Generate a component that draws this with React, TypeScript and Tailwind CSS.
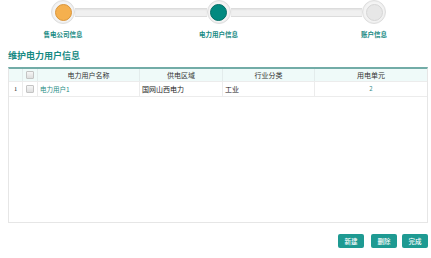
import React from "react";

function Step({ color, ring, label }: { color: string; ring: string; label: string }) {
  return (
    <div className="flex flex-col items-center w-[24px]">
      <div className="w-[24px] h-[24px] rounded-full bg-[#f4f4f4] border border-[#dedede] flex items-center justify-center shadow-[inset_0_0_2px_rgba(0,0,0,0.08)]">
        <div
          className="w-[17px] h-[17px] rounded-full border"
          style={{ backgroundColor: color, borderColor: ring }}
        />
      </div>
      <div className="mt-[5px] whitespace-nowrap text-[6.5px] leading-[10px] font-bold text-[#178a83]">
        {label}
      </div>
    </div>
  );
}

function Bar() {
  return (
    <div className="flex-1 h-[9px] mt-[7.5px] bg-[#f0f0f0] border-y border-[#dcdcdc] shadow-[inset_0_1px_2px_rgba(0,0,0,0.06)]" />
  );
}

function Checkbox() {
  return (
    <div className="w-[8px] h-[8px] border border-[#c4c4c4] rounded-[1px] bg-gradient-to-b from-[#f6f6f6] to-[#dedede]" />
  );
}

export default function App() {
  return (
    <div
      className="w-[431px] h-[258px] bg-white relative overflow-hidden"
      style={{ fontFamily: '"Noto Sans CJK SC", "Noto Sans", sans-serif' }}
    >
      {/* Steps */}
      <div className="flex items-start pl-[51px] w-[386px] pt-0">
        <Step color="#f5b04e" ring="#d9953a" label="售电公司信息" />
        <Bar />
        <Step color="#018a80" ring="#016e66" label="电力用户信息" />
        <Bar />
        <Step color="#e7e7e7" ring="#d6d6d6" label="账户信息" />
      </div>

      {/* Title */}
      <div className="pl-[8px] mt-[11px] text-[9px] leading-[12px] font-bold text-[#178a83]">
        维护电力用户信息
      </div>

      {/* Table */}
      <div className="ml-[8px] mt-[5px] w-[420px] h-[156px] border-x border-b border-[#e6e6e6] border-t-2 border-t-[#72aca7] flex flex-col">
        <div className="flex h-[12px] bg-[#effaf9] text-[7px] leading-[12px] text-[#333]">
          <div className="w-[14px] border-r border-[#e3ecec]" />
          <div className="w-[15px] border-r border-[#e3ecec] flex items-center justify-center">
            <Checkbox />
          </div>
          <div className="w-[102px] border-r border-[#e3ecec] text-center">电力用户名称</div>
          <div className="w-[83px] border-r border-[#e3ecec] text-center">供电区域</div>
          <div className="w-[92px] border-r border-[#e3ecec] text-center">行业分类</div>
          <div className="flex-1 text-center">用电单元</div>
        </div>
        <div className="flex h-[16px] border-y border-[#ececec] text-[7px] leading-[14px] text-[#222]">
          <div
            className="w-[14px] border-r border-[#ececec] text-center text-[6.5px]"
            style={{ fontFamily: '"Liberation Serif", serif' }}
          >
            1
          </div>
          <div className="w-[15px] border-r border-[#ececec] flex items-center justify-center">
            <Checkbox />
          </div>
          <div className="w-[102px] border-r border-[#ececec] pl-[2px] text-[6.5px] text-[#1f8d85]">电力用户1</div>
          <div className="w-[83px] border-r border-[#ececec] pl-[2px]">国网山西电力</div>
          <div className="w-[92px] border-r border-[#ececec] pl-[2px]">工业</div>
          <div className="flex-1 text-center text-[6px] text-[#3a8f8a]">2</div>
        </div>
        <div className="flex-1" />
      </div>

      {/* Buttons */}
      <div className="flex justify-end pr-[3px] mt-[11px]">
        <button className="w-[26px] h-[14px] rounded-[2px] bg-[#1e9a92] text-white text-[6.5px] leading-[14px] font-medium">
          新建
        </button>
        <button className="ml-[7px] w-[26px] h-[14px] rounded-[2px] bg-[#1e9a92] text-white text-[6.5px] leading-[14px] font-medium">
          删除
        </button>
        <button className="ml-[5px] w-[26px] h-[14px] rounded-[2px] bg-[#1e9a92] text-white text-[6.5px] leading-[14px] font-medium">
          完成
        </button>
      </div>
    </div>
  );
}
